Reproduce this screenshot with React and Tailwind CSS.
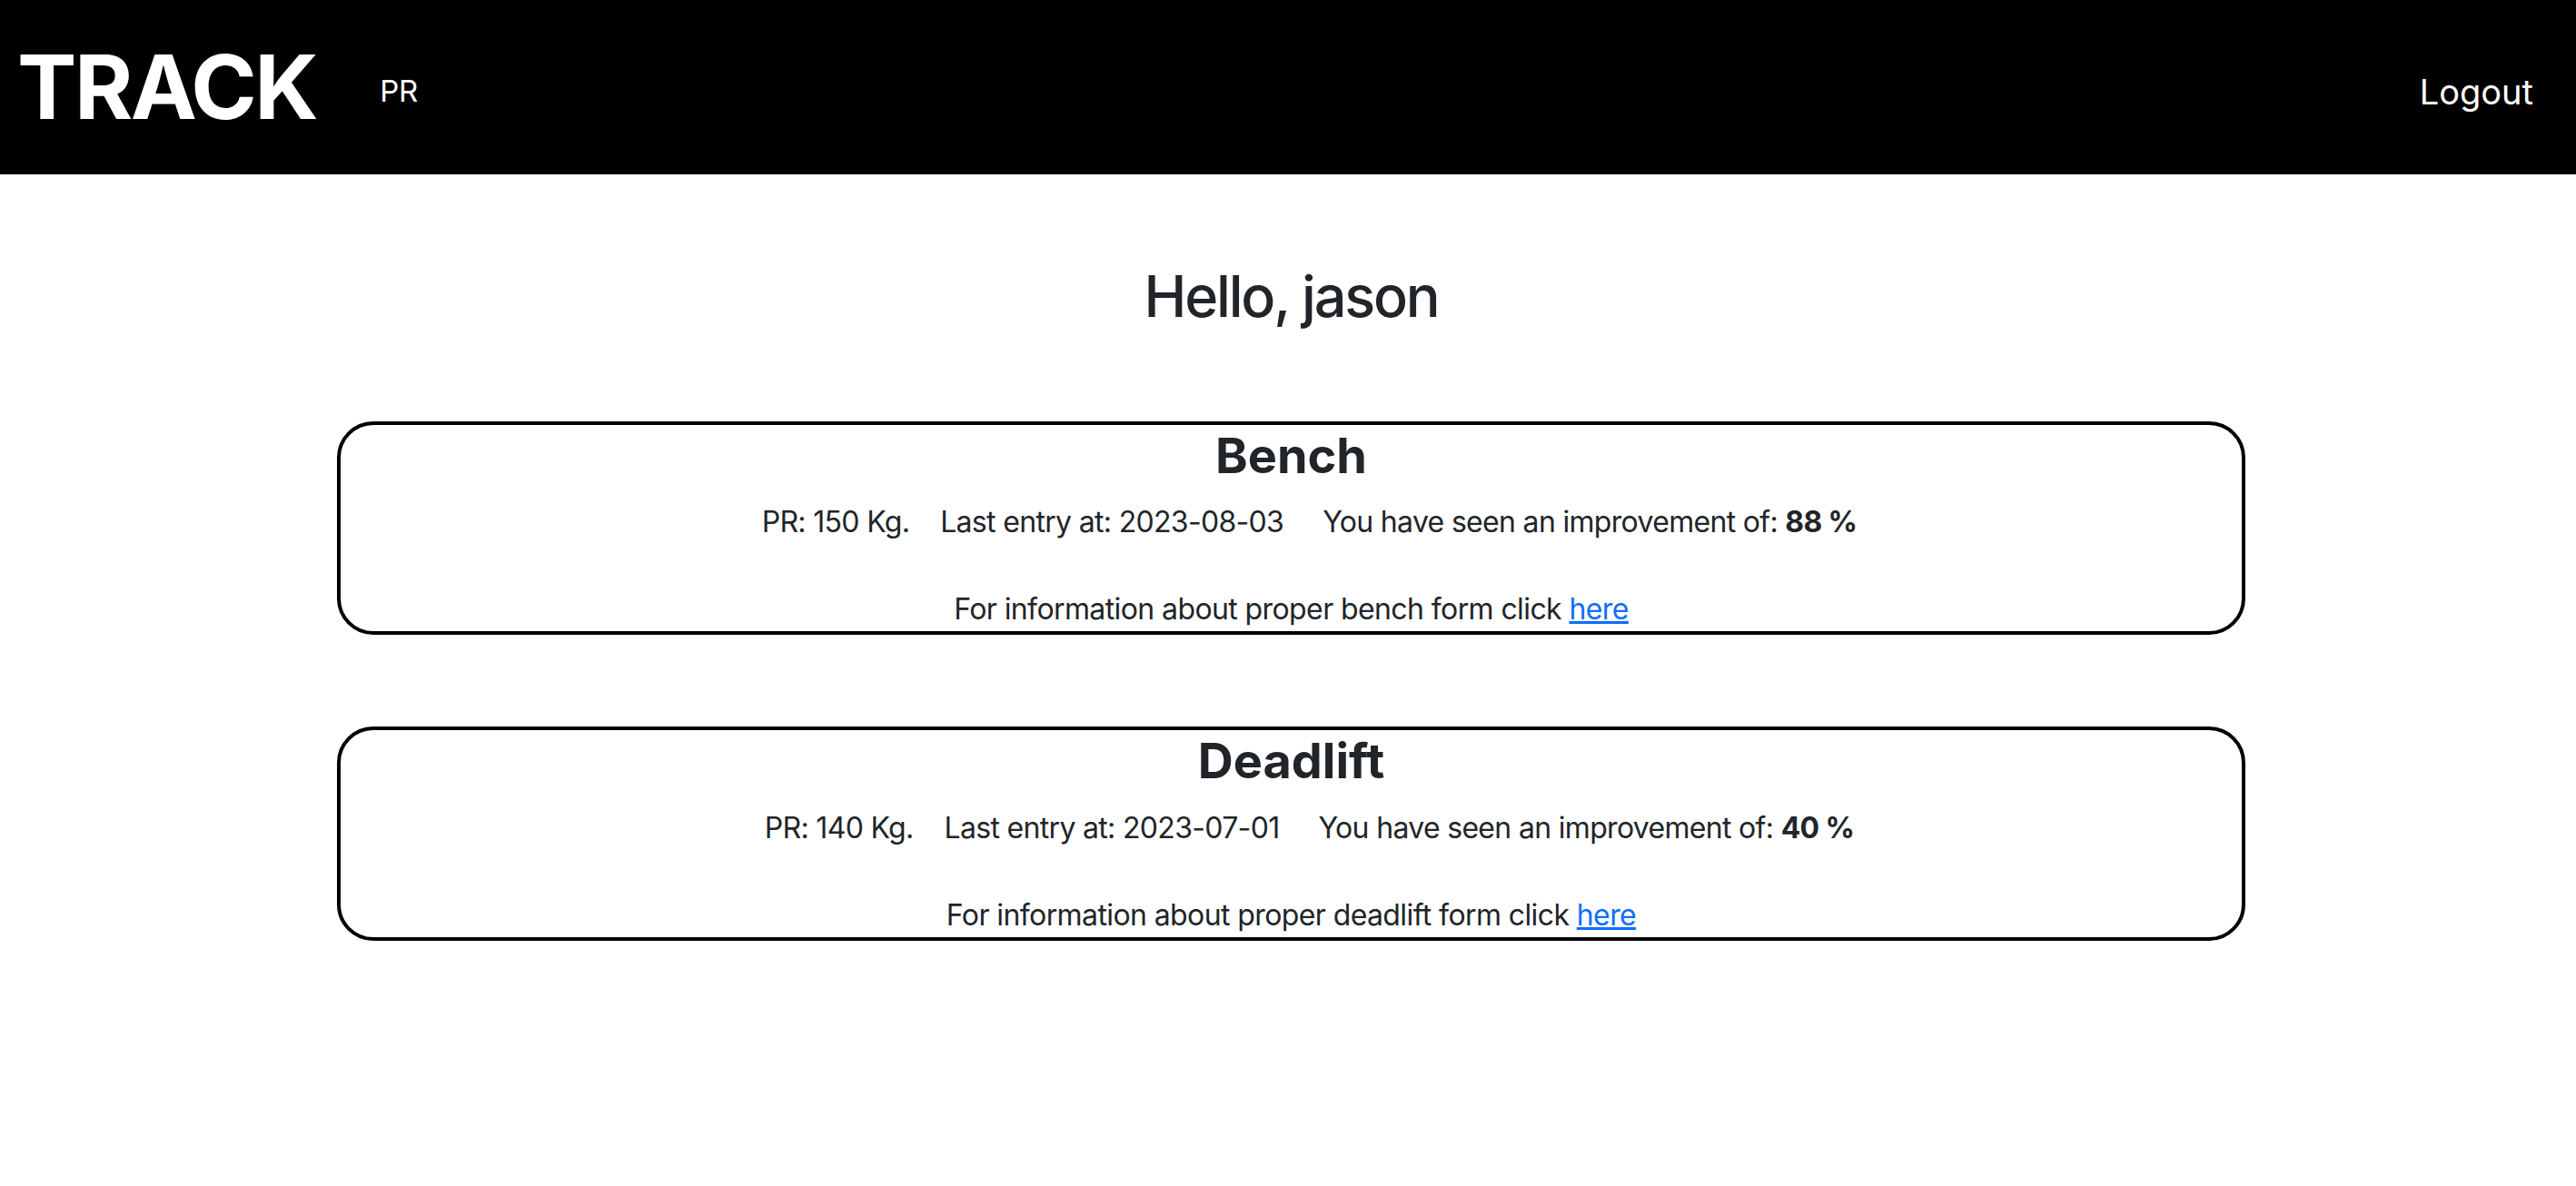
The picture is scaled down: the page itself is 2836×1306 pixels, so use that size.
import {useState} from "react";

const lifts = [
  {name: "Bench", pr: 150, lastEntry: "2023-08-03", improvement: 88},
  {name: "Deadlift", pr: 140, lastEntry: "2023-07-01", improvement: 40},
];

function Navbar() {
  return (
    <nav className="h-[192px] bg-black text-white flex items-center justify-between pl-[19px] pr-[47px]">
      <div className="flex items-center">
        <span className="text-[98px] font-bold leading-none tracking-[-2.5px]">TRACK</span>
        <a href="#" className="ml-[70px] mt-[10px] text-[33px] tracking-[-0.5px]">
          PR
        </a>
      </div>
      <a href="#" className="text-[38px] mt-[10px]">
        Logout
      </a>
    </nav>
  );
}

function LiftCard({lift}) {
  return (
    <div className="w-[2101px] mx-auto border-4 border-black rounded-[40px] text-center pt-[2px]">
      <h3 className="text-[54px] font-bold leading-[1.2] mb-[17px]">{lift.name}</h3>
      <p className="text-[32px] leading-[1.5] tracking-[-0.68px]">
        <span className="ml-[40px]">PR: {lift.pr} Kg.</span>
        <span className="ml-[34px]">Last entry at: {lift.lastEntry}</span>
        <span className="ml-[43px]">
          You have seen an improvement of: <b>{lift.improvement} %</b>
        </span>
      </p>
      <p className="text-[32px] leading-[1.5] tracking-[-0.6px] mt-[48px]">
        For information about proper {lift.name.toLowerCase()} form click{" "}
        <a href="#" className="text-[#0d6efd] underline">
          here
        </a>
      </p>
    </div>
  );
}

export default function App() {
  const [user] = useState("jason");

  return (
    <div className="min-h-[1306px] bg-white text-[#212529] font-['Inter',sans-serif]">
      <Navbar />
      <main className="pt-[97px] pl-[7px] flex flex-col">
        <h2 className="text-[63px] font-medium leading-[1.2] tracking-[-2.2px] text-center mb-[99px]">
          Hello, {user}
        </h2>
        <div className="flex flex-col gap-[101px]">
          {lifts.map((lift) => (
            <LiftCard key={lift.name} lift={lift} />
          ))}
        </div>
      </main>
    </div>
  );
}
